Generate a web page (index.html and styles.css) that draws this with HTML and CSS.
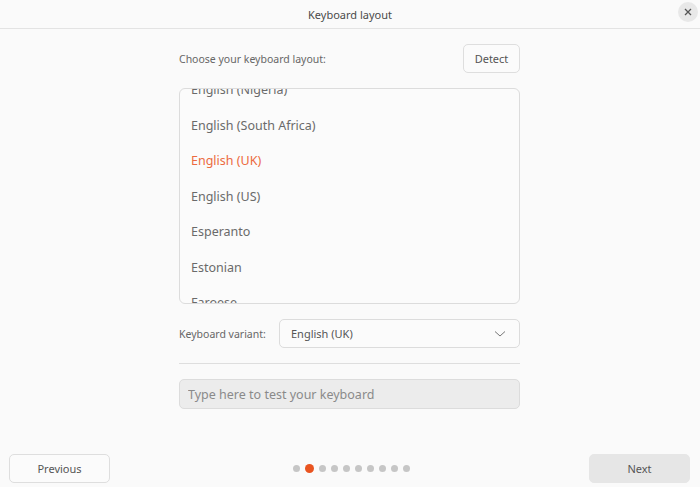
FILE: index.html
```html
<!DOCTYPE html>
<html lang="en">
<head>
    <meta charset="UTF-8">
    <title>Keyboard layout</title>
    <link rel="stylesheet" href="styles.css">
</head>
<body>
    <div class="window">
        <div class="titlebar">
            <span class="title">Keyboard layout</span>
            <button class="close">
                <svg width="10" height="10" viewBox="0 0 10 10">
                    <path d="M2 2 L8 8 M8 2 L2 8" stroke="#555" stroke-width="1.3" fill="none"/>
                </svg>
            </button>
        </div>

        <div class="content">
            <div class="column">
                <div class="row head">
                    <span class="label">Choose your keyboard layout:</span>
                    <button class="btn detect">Detect</button>
                </div>

                <div class="list">
                    <ul class="items">
                        <li>English (Nigeria)</li>
                        <li>English (South Africa)</li>
                        <li class="selected">English (UK)</li>
                        <li>English (US)</li>
                        <li>Esperanto</li>
                        <li>Estonian</li>
                        <li>Faroese</li>
                    </ul>
                </div>

                <div class="row variant">
                    <span class="label">Keyboard variant:</span>
                    <div class="select">
                        <span>English (UK)</span>
                        <svg width="12" height="8" viewBox="0 0 12 8">
                            <path d="M1 1.5 L6 6 L11 1.5" stroke="#777" stroke-width="1" fill="none"/>
                        </svg>
                    </div>
                </div>

                <hr class="sep">

                <input class="test" type="text" placeholder="Type here to test your keyboard">
            </div>
        </div>

        <div class="footer">
            <button class="btn nav">Previous</button>
            <div class="dots">
                <span class="dot"></span>
                <span class="dot active"></span>
                <span class="dot"></span>
                <span class="dot"></span>
                <span class="dot"></span>
                <span class="dot"></span>
                <span class="dot"></span>
                <span class="dot"></span>
                <span class="dot"></span>
                <span class="dot"></span>
            </div>
            <button class="btn nav next">Next</button>
        </div>
    </div>
</body>
</html>
```

FILE: styles.css
```css
* {
    margin: 0;
    padding: 0;
    box-sizing: border-box;
}

html,
body {
    width: 700px;
    height: 487px;
    background-color: #fafafa;
    font-family: "Noto Sans", "Open Sans", sans-serif;
    color: #5d5d5d;
    overflow: hidden;
}

.window {
    display: flex;
    flex-direction: column;
    height: 487px;
}

.titlebar {
    height: 29px;
    border-bottom: 1px solid #e3e3e3;
    display: flex;
    align-items: center;
    justify-content: center;
    position: relative;
}

.title {
    font-size: 11px;
    color: #4a4a4a;
}

.close {
    position: absolute;
    right: 2px;
    top: 2px;
    width: 20px;
    height: 20px;
    border-radius: 50%;
    border: none;
    background-color: #e8e8e8;
    display: flex;
    align-items: center;
    justify-content: center;
}

.content {
    flex: 1;
    display: flex;
    justify-content: center;
    padding-top: 15px;
}

.column {
    width: 341px;
    margin-right: 1px;
    display: flex;
    flex-direction: column;
}

.row {
    display: flex;
    align-items: center;
}

.head {
    justify-content: space-between;
    height: 29px;
}

.label {
    font-size: 10.5px;
    color: #666;
}

.btn {
    font-family: inherit;
    font-size: 11px;
    color: #555;
    background-color: #fbfbfb;
    border: 1px solid #dedede;
    border-radius: 5px;
}

.detect {
    width: 57px;
    height: 29px;
}

.list {
    margin-top: 15px;
    height: 216px;
    border: 1px solid #dcdcdc;
    border-radius: 6px;
    background-color: #fbfbfb;
    overflow: hidden;
}

.items {
    list-style: none;
    margin-top: -17px;
}

.items li {
    height: 35.5px;
    line-height: 35.5px;
    padding-left: 11px;
    font-size: 12.5px;
    color: #6a6a6a;
}

.items li.selected {
    color: #ec6a40;
}

.variant {
    margin-top: 15px;
    height: 29px;
    justify-content: space-between;
}

.select {
    width: 241px;
    height: 29px;
    border: 1px solid #dcdcdc;
    border-radius: 5px;
    background-color: #fbfbfb;
    display: flex;
    align-items: center;
    justify-content: space-between;
    padding: 0 13px 0 11px;
    font-size: 11px;
    color: #555;
}

.sep {
    border: none;
    border-top: 1px solid #dedede;
    margin-top: 15px;
}

.test {
    margin-top: 15px;
    height: 30px;
    border: 1px solid #dcdcdc;
    border-radius: 5px;
    background-color: #ececec;
    padding-left: 8px;
    font-family: inherit;
    font-size: 12.5px;
    outline: none;
}

.test::placeholder {
    color: #8a8a8a;
}

.footer {
    height: 33px;
    margin-bottom: 2px;
    padding: 0 10px 0 9px;
    display: flex;
    align-items: center;
    justify-content: space-between;
}

.nav {
    width: 101px;
    height: 29px;
}

.next {
    background-color: #e6e6e6;
    border-color: #e6e6e6;
}

.dots {
    display: flex;
    align-items: center;
    gap: 5px;
    margin-left: 4px;
}

.dot {
    width: 7px;
    height: 7px;
    border-radius: 50%;
    background-color: #c6c6c6;
}

.dot.active {
    width: 9px;
    height: 9px;
    background-color: #e95420;
}
```
